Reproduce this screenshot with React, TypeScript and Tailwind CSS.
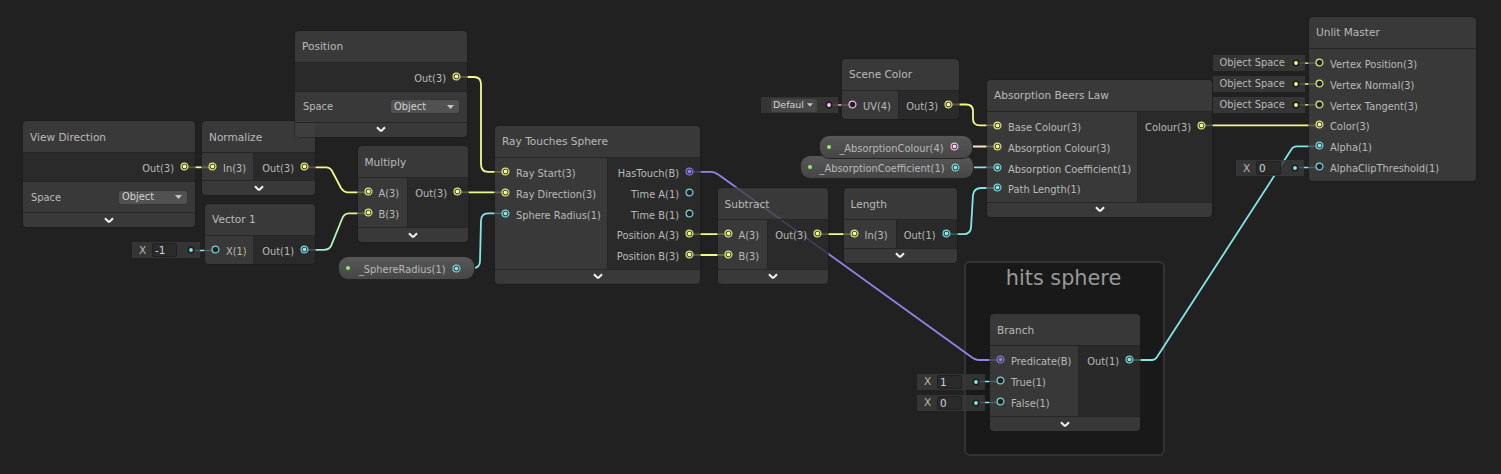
import React from "react";

const YELLOW = "#f3fa8c";
const CYAN = "#84e4e7";
const PURPLE = "#9481e6";
const PINK = "#fbcbf4";

type Port = { label: string; color: string; linked?: boolean };

const yellow = (label: string, linked = true): Port => ({ label, color: YELLOW, linked });
const cyan = (label: string, linked = true): Port => ({ label, color: CYAN, linked });

function PortIcon({ color, linked }: { color: string; linked?: boolean }) {
  return (
    <svg width="9" height="9" viewBox="0 0 9 9" className="relative -top-px block shrink-0">
      <circle cx="4.5" cy="4.5" r="3.45" fill="#212121" stroke={color} strokeWidth="1.2" strokeOpacity="0.9" />
      {linked && <circle cx="4.5" cy="4.5" r="2" fill={color} />}
    </svg>
  );
}

function InputRow({ port }: { port: Port }) {
  return (
    <div className="flex h-[20.8px] items-center gap-[6px] pl-[6px]">
      <PortIcon color={port.color} linked={port.linked} />
      <span className="relative top-[1.5px]">{port.label}</span>
    </div>
  );
}

function OutputRow({ port }: { port: Port }) {
  return (
    <div className="flex h-[20.8px] items-center justify-end gap-[6px] pr-[6px]">
      <span className="relative top-[1.5px]">{port.label}</span>
      <PortIcon color={port.color} linked={port.linked} />
    </div>
  );
}

function Caret({ className }: { className: string }) {
  return (
    <svg viewBox="0 0 7 4" className={className}>
      <path d="M0 0h7L3.5 4z" fill="#c4c4c4" />
    </svg>
  );
}

function Footer() {
  return (
    <div className="flex h-[15px] shrink-0 items-center justify-center border-t border-[#262626] bg-[#404040]/80">
      <svg width="10" height="7" viewBox="0 0 10 7">
        <path d="M1 1.2 4.2 4.4Q5 5 5.8 4.4L9 1.2" fill="none" stroke="#eeeeee" strokeWidth="2.1" />
      </svg>
    </div>
  );
}

type NodeProps = {
  place: string;
  title: string;
  inputs?: Port[];
  outputs?: Port[];
  split?: string;
  space?: boolean;
  footer?: boolean;
};

function GraphNode({ place, title, inputs, outputs, split = "", space, footer = true }: NodeProps) {
  return (
    <section
      className={`absolute flex flex-col overflow-hidden rounded-[4px] shadow-[0_0_0_1px_rgba(25,25,25,0.5)] ${place}`}
    >
      <h2 className="flex h-[31px] shrink-0 items-center bg-[#404040]/80 pt-px pl-[7px] text-[10.55px] font-normal text-[#b9b9b9]">
        {title}
      </h2>
      <div className="flex min-h-0 flex-1 border-t border-[#262626]">
        {inputs && (
          <div className={`bg-[#404040]/80 pt-[4.5px] ${outputs ? "border-r border-[#262626]" : "flex-1"} ${split}`}>
            {inputs.map((p) => (
              <InputRow key={p.label} port={p} />
            ))}
          </div>
        )}
        {outputs && (
          <div className="flex-1 bg-[#2d2d2d]/80 pt-[4.5px]">
            {outputs.map((p) => (
              <OutputRow key={p.label} port={p} />
            ))}
          </div>
        )}
      </div>
      {space && (
        <div className="flex h-[31px] shrink-0 items-center justify-between border-t border-[#262626] bg-[#404040]/80 pr-[8px] pl-[8px]">
          <span className="relative top-[0.5px]">Space</span>
          <span className="flex h-[13px] w-[68px] items-center justify-between rounded-[2px] bg-[#515151] pt-[0.5px] pr-[5px] pl-[3px] text-[#d2d2d2] shadow-[0_0_1px_#222]">
            Object
            <Caret className="h-[4px] w-[7px]" />
          </span>
        </div>
      )}
      {footer && <Footer />}
    </section>
  );
}

function Dot({ color }: { color: string }) {
  return (
    <svg width="8" height="8" viewBox="0 0 8 8" className="ml-auto block shrink-0">
      <circle cx="4" cy="4" r="3.5" fill="#1c1c1c" />
      <circle cx="4" cy="4" r="1.9" fill={color} />
    </svg>
  );
}

function ValueChip({ place, value }: { place: string; value: string }) {
  return (
    <div className={`absolute flex h-[16px] w-[68px] items-center bg-[#383838]/85 pr-[5px] pl-[7px] ${place}`}>
      <span className="w-[13px] text-[10.5px]">X</span>
      <span className="flex h-[14px] w-[25px] items-center rounded-[2px] border border-[#202020] bg-[#2a2a2a] pt-px pl-[2px] text-[10.4px] text-[#d2d2d2]">
        {value}
      </span>
      <Dot color={CYAN} />
    </div>
  );
}

function SpaceChip({ place }: { place: string }) {
  return (
    <div className={`absolute flex h-[16px] w-[92px] items-center bg-[#383838]/85 pr-[5px] pl-[7px] ${place}`}>
      <span>Object Space</span>
      <Dot color={YELLOW} />
    </div>
  );
}

function Pill({ place, label, color }: { place: string; label: string; color: string }) {
  return (
    <div
      className={`absolute flex h-[22px] items-center rounded-[9px] bg-linear-to-b from-[#575757] to-[#464646] pr-[13px] pl-[7px] shadow-[0_0_0_1px_#242424] ${place}`}
    >
      <span className="size-[4px] rounded-full bg-[#91ee62]" />
      <span className="relative top-[2px] ml-auto pr-[6.5px]">{label}</span>
      <span className="relative top-px">
        <PortIcon color={color} linked />
      </span>
    </div>
  );
}

function Wires() {
  return (
    <svg width="1501" height="474" viewBox="0 0 1501 474" className="absolute inset-0" fill="none" strokeWidth="1.8">
      <defs>
        <linearGradient id="scalarToVector" gradientUnits="userSpaceOnUse" x1="305" y1="0" x2="368" y2="0">
          <stop stopColor={CYAN} />
          <stop offset="1" stopColor={YELLOW} />
        </linearGradient>
        <linearGradient id="colourToVector" gradientUnits="userSpaceOnUse" x1="955" y1="0" x2="998" y2="0">
          <stop stopColor={PINK} />
          <stop offset="1" stopColor={YELLOW} />
        </linearGradient>
      </defs>
      <g stroke={YELLOW}>
        <path d="M185 167.3H212" />
        <path d="M305 167.3H326Q330 167.3 332 171L341 188Q344 192.3 348 192.3H368" />
        <path d="M457 77H474Q481 77 481 84V164Q481 171.8 488 171.8H505" />
        <path d="M458 192.3H505" />
        <path d="M690 234.2H728M690 255H728" />
        <path d="M818 234.2H854" />
        <path d="M949 104.5H966Q973 104.5 973 111V119Q973 125.4 980 125.4H998" />
        <path d="M1202 125.4H1319" />
        <path d="M1296 63.1H1319M1296 84H1319M1296 104.8H1319" strokeWidth="1.3" />
      </g>
      <path d="M305 249.8H324Q329 249.8 331 246L342 219Q344 213.3 349 213.3H368" stroke="url(#scalarToVector)" />
      <path d="M955 146.5H990L998 146.4" stroke="url(#colourToVector)" />
      <path d="M828 105H852" stroke={PINK} strokeWidth="1.3" />
      <path d="M690 171.8H711Q715 171.8 719 175L970 356Q975 360 979 360H1000" stroke={PURPLE} />
      <g stroke={CYAN}>
        <path d="M457 268H473Q480 268 480 261L481 221Q481 213.3 488 213.3H505" />
        <path d="M947 234.2H964Q970 234.2 971 228L973 195Q974 188 981 188H998" />
        <path d="M956 167.3H998" />
        <path d="M1130 360H1152Q1155 360 1157 357L1291 150Q1293 146.3 1297 146.3H1319" />
        <path d="M192 250.5H215M1296 167.5H1319M977 381.5H1000M977 402.5H1000" strokeWidth="1.3" />
      </g>
    </svg>
  );
}

export default function App() {
  return (
    <main className="relative h-[474px] w-[1501px] overflow-hidden bg-[#212121] font-['DejaVu_Sans',sans-serif] text-[9.85px] leading-none whitespace-nowrap text-[#b9b9b9]">
      <div className="absolute top-[261px] left-[964px] h-[195px] w-[201px] rounded-[6px] border-2 border-[#333333] bg-[#191919] pt-[5px] pr-[2px] text-center text-[20.8px] text-[#999999]">
        hits sphere
      </div>
      <Wires />

      <GraphNode place="left-[23px] top-[121px] h-[106px] w-[172px]" title="View Direction" outputs={[yellow("Out(3)")]} space />
      <GraphNode place="left-[202px] top-[121px] h-[74px] w-[113px]" title="Normalize" split="w-[52px]" inputs={[yellow("In(3)")]} outputs={[yellow("Out(3)")]} />
      <GraphNode place="left-[295px] top-[30.6px] h-[106px] w-[172px]" title="Position" outputs={[yellow("Out(3)")]} space />
      <GraphNode place="left-[205px] top-[203.6px] h-[60px] w-[110px]" title="Vector 1" split="w-[49px]" inputs={[cyan("X(1)", false)]} outputs={[cyan("Out(1)")]} footer={false} />
      <GraphNode place="left-[357.5px] top-[146px] h-[96px] w-[110.5px]" title="Multiply" split="w-[50px]" inputs={[yellow("A(3)"), yellow("B(3)")]} outputs={[yellow("Out(3)")]} />
      <GraphNode
        place="left-[495px] top-[125.6px] h-[158px] w-[205px]"
        title="Ray Touches Sphere"
        split="w-[113px]"
        inputs={[yellow("Ray Start(3)"), yellow("Ray Direction(3)"), cyan("Sphere Radius(1)")]}
        outputs={[
          { label: "HasTouch(B)", color: PURPLE, linked: true },
          cyan("Time A(1)", false),
          cyan("Time B(1)", false),
          yellow("Position A(3)"),
          yellow("Position B(3)"),
        ]}
      />
      <GraphNode place="left-[717.5px] top-[188px] h-[95.5px] w-[110.5px]" title="Subtract" split="w-[50px]" inputs={[yellow("A(3)"), yellow("B(3)")]} outputs={[yellow("Out(3)")]} />
      <GraphNode place="left-[843.5px] top-[188px] h-[74.5px] w-[113px]" title="Length" split="w-[53px]" inputs={[yellow("In(3)")]} outputs={[cyan("Out(1)")]} />
      <GraphNode place="left-[842px] top-[58.6px] h-[60px] w-[117px]" title="Scene Color" split="w-[57px]" inputs={[{ label: "UV(4)", color: PINK }]} outputs={[yellow("Out(3)")]} footer={false} />
      <GraphNode
        place="left-[987px] top-[79.6px] h-[137px] w-[225px]"
        title="Absorption Beers Law"
        split="w-[151px]"
        inputs={[yellow("Base Colour(3)"), yellow("Absorption Colour(3)"), cyan("Absorption Coefficient(1)"), cyan("Path Length(1)")]}
        outputs={[yellow("Colour(3)")]}
      />
      <GraphNode
        place="left-[1309px] top-[16.6px] h-[164px] w-[167px]"
        title="Unlit Master"
        inputs={[
          yellow("Vertex Position(3)", false),
          yellow("Vertex Normal(3)", false),
          yellow("Vertex Tangent(3)", false),
          yellow("Color(3)"),
          cyan("Alpha(1)"),
          cyan("AlphaClipThreshold(1)", false),
        ]}
        footer={false}
      />
      <GraphNode
        place="left-[990px] top-[314px] h-[117px] w-[150px]"
        title="Branch"
        split="w-[89px]"
        inputs={[{ label: "Predicate(B)", color: PURPLE, linked: true }, cyan("True(1)", false), cyan("False(1)", false)]}
        outputs={[cyan("Out(1)")]}
      />

      <Pill place="left-[339px] top-[257px] w-[135px]" label="_SphereRadius(1)" color={CYAN} />
      <Pill place="left-[801px] top-[156px] w-[172px]" label="_AbsorptionCoefficient(1)" color={CYAN} />
      <Pill place="left-[820px] top-[135.5px] w-[152px]" label="_AbsorptionColour(4)" color={PINK} />

      <ValueChip place="left-[132px] top-[242px]" value="-1" />
      <ValueChip place="left-[1236px] top-[160px]" value="0" />
      <ValueChip place="left-[917px] top-[373.5px]" value="1" />
      <ValueChip place="left-[917px] top-[394.5px]" value="0" />
      <SpaceChip place="left-[1212.5px] top-[55.4px]" />
      <SpaceChip place="left-[1212.5px] top-[76px]" />
      <SpaceChip place="left-[1212.5px] top-[97px]" />
      <div className="absolute top-[97px] left-[761px] flex h-[16px] w-[77px] items-center bg-[#383838]/85 pr-[5px] pl-[10px]">
        <span className="flex h-[13px] w-[46px] items-center justify-between rounded-[2px] bg-[#484848] pr-[4px] pl-[2px] text-[9.5px] text-[#d2d2d2]">
          Defaul
          <Caret className="h-[4px] w-[6px] shrink-0" />
        </span>
        <Dot color={PINK} />
      </div>
    </main>
  );
}
